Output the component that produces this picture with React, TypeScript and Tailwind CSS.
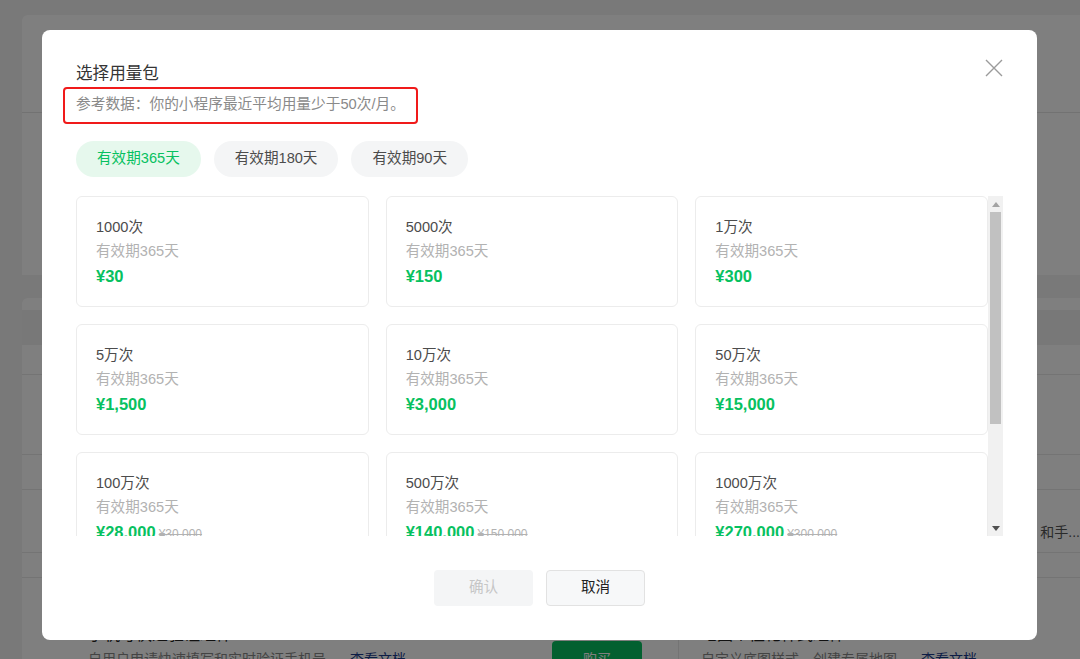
import React, { useState } from "react";

const packs = [
  { count: "1000次", price: "¥30" },
  { count: "5000次", price: "¥150" },
  { count: "1万次", price: "¥300" },
  { count: "5万次", price: "¥1,500" },
  { count: "10万次", price: "¥3,000" },
  { count: "50万次", price: "¥15,000" },
  { count: "100万次", price: "¥28,000", origin: "¥30,000" },
  { count: "500万次", price: "¥140,000", origin: "¥150,000" },
  { count: "1000万次", price: "¥270,000", origin: "¥300,000" },
];

const tabs = ["有效期365天", "有效期180天", "有效期90天"];

const font = "font-['Liberation_Sans','Noto_Sans_CJK_SC',sans-serif]";

function BackgroundPage() {
  return (
    <div className="flex h-[659px] w-[1080px] flex-col overflow-hidden bg-[#f3f3f3] pl-[22px] pt-[15px]">
      <div className="h-[260px] shrink-0 rounded-tl-md bg-white">
        <div className="h-[98px] border-b border-[#e5e5e5]" />
      </div>
      <div className="mt-[23px] flex shrink-0 flex-col rounded-tl-md bg-white">
        <div className="mt-[12px] h-[35px] shrink-0 bg-[#f0f0f0]" />
        <div className="h-[30px] shrink-0 border-b border-[#e8e8e8]" />
        <div className="h-[80px] shrink-0 border-b border-[#e8e8e8]" />
        <div className="h-[35px] shrink-0 border-b border-[#e8e8e8]" />
        <div className="flex h-[63px] shrink-0 items-end justify-end border-b border-[#e8e8e8] pb-[10px]">
          <span className="text-sm text-[#555]">和手...</span>
        </div>
        <div className="h-[25px] shrink-0 border-b border-[#e8e8e8]" />
        <div className="ml-[43px] flex h-[120px] shrink-0">
          <div className="flex w-[614px] border-r border-[#e8e8e8] pl-[23px] pr-[36px]">
            <div className="flex-1 pt-[45px]">
              <div className="text-base leading-6 text-[#222]">手机号快速验证组件</div>
              <div className="text-sm leading-6 text-[#888]">
                自用户申请快速填写和实时验证手机号
                <span className="ml-6 text-[#1a3a8c]">查看文档</span>
              </div>
            </div>
            <div className="mt-[63px] flex h-[36px] w-[90px] items-center justify-center rounded bg-[#07c160] text-sm text-white">
              购买
            </div>
          </div>
          <div className="pl-[22px] pt-[45px]">
            <div className="text-base leading-6 text-[#222]">地图个性化样式组件</div>
            <div className="text-sm leading-6 text-[#888]">
              自定义底图样式、创建专属地图
              <span className="ml-6 text-[#1a3a8c]">查看文档</span>
            </div>
          </div>
        </div>
      </div>
    </div>
  );
}

function PackCard({ count, price, origin }: { count: string; price: string; origin?: string }) {
  return (
    <div className="h-[111px] rounded-md border border-[#ececec] bg-white px-[19px] pt-[18px]">
      <div className="text-[14.6px] leading-6 text-[#4c4c4c]">{count}</div>
      <div className="text-[14.6px] leading-6 text-[#b2b2b2]">有效期365天</div>
      <div className="flex items-baseline leading-[26px]">
        <span className="text-[16.5px] font-bold text-[#07c160]">{price}</span>
        {origin && <span className="ml-[3px] text-xs text-[#b2b2b2] line-through">{origin}</span>}
      </div>
    </div>
  );
}

function ScrollBar() {
  return (
    <div className="flex w-[15px] flex-col bg-[#f1f1f1]">
      <div className="flex h-[16px] items-center justify-center">
        <svg viewBox="0 0 8 5" className="h-[5px] w-[8px]" fill="#a3a3a3">
          <path d="M4 0L8 5H0Z" />
        </svg>
      </div>
      <div className="mx-[2px] h-[212px] bg-[#c1c1c1]" />
      <div className="flex-1" />
      <div className="flex h-[16px] items-center justify-center">
        <svg viewBox="0 0 8 5" className="h-[5px] w-[8px]" fill="#505050">
          <path d="M0 0H8L4 5Z" />
        </svg>
      </div>
    </div>
  );
}

export default function App() {
  const [tab, setTab] = useState(0);

  return (
    <div className={`relative h-[659px] w-[1080px] overflow-hidden ${font}`}>
      <BackgroundPage />
      <div className="absolute inset-0 flex items-start justify-center bg-black/50 pt-[30px]">
        <div className="relative ml-[-1px] flex h-[610px] w-[995px] flex-col rounded-lg bg-white pl-[34px] pr-[34px] pt-[32px]">
          <button className="absolute right-[34px] top-[29px] h-[18px] w-[18px]">
            <svg viewBox="0 0 18 18" className="h-[18px] w-[18px]" fill="none" stroke="#9b9b9b" strokeWidth="1.4">
              <path d="M1 1L17 17M17 1L1 17" />
            </svg>
          </button>

          <h2 className="text-[16.6px] leading-6 text-[#353535]">选择用量包</h2>
          <div className="relative mt-[8px] self-start">
            <p className="text-[14.7px] leading-5 text-[#8a8a8a]">参考数据：你的小程序最近平均用量少于50次/月。</p>
            <div className="pointer-events-none absolute bottom-[-10px] left-[-13px] right-[-13px] top-[-7px] rounded-sm border-2 border-[#f01a1a]" />
          </div>

          <div className="mt-[27px] flex gap-[13px]">
            {tabs.map((t, i) => (
              <button
                key={t}
                onClick={() => setTab(i)}
                className={`h-[36px] rounded-full px-[21px] text-[14.6px] ${
                  i === tab ? "bg-[#e6f8ed] text-[#07c160]" : "bg-[#f4f5f6] text-[#4c4c4c]"
                }`}
              >
                {t}
              </button>
            ))}
          </div>

          <div className="mt-[19px] flex h-[340px] w-[927px]">
            <div className="h-full w-[912px] overflow-hidden">
              <div className="grid grid-cols-3 gap-x-[17px] gap-y-[17px]">
                {packs.map((p) => (
                  <PackCard key={p.count} {...p} />
                ))}
              </div>
            </div>
            <ScrollBar />
          </div>

          <div className="mt-[34px] flex justify-center gap-[13px]">
            <button disabled className="h-[36px] w-[99px] rounded bg-[#f4f5f6] text-[14.6px] text-[#c6c6c6]">
              确认
            </button>
            <button className="h-[36px] w-[99px] rounded border border-[#e2e2e2] bg-[#f7f8f9] text-[14.6px] text-[#222]">
              取消
            </button>
          </div>
        </div>
      </div>
    </div>
  );
}
